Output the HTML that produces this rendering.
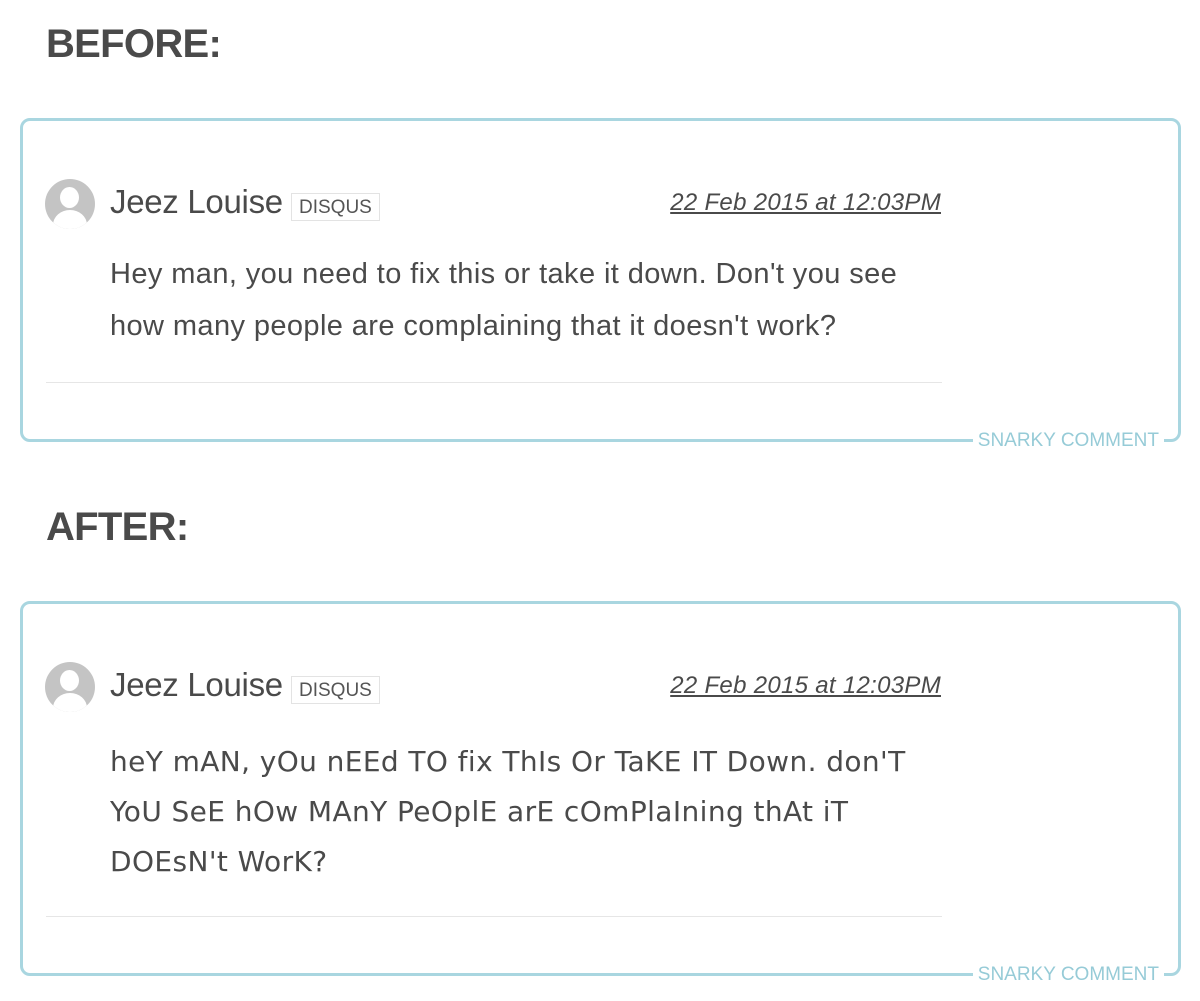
<!DOCTYPE html>
<html><head><style>
body{margin:0;width:1200px;height:1001px;background:#fff;position:relative;font-family:"Liberation Sans",sans-serif;color:#4a4a4a;overflow:hidden}
.h{position:absolute;left:46px;font-weight:bold;font-size:40px;color:#4a4a4a;letter-spacing:-0.7px}
.box{position:absolute;left:20px;width:1161px;border:3px solid #a9d6e0;border-radius:10px;box-sizing:border-box}
.av{position:absolute;left:22px;width:50px;height:50px;border-radius:50%;background:#c4c4c4;overflow:hidden}
.av:before{content:"";position:absolute;left:15px;top:8px;width:19px;height:21px;border-radius:50%;background:#fff}
.av:after{content:"";position:absolute;left:8px;top:31px;width:34px;height:30px;border-radius:50%;background:#fff}
.name{position:absolute;left:87px;font-size:33px;color:#4a4a4a;white-space:nowrap;letter-spacing:-0.3px}
.tag{position:absolute;left:268px;font-size:19px;border:1px solid #e3e3e3;padding:2px 7px;color:#555;height:28px;box-sizing:border-box;line-height:23px}
.date{position:absolute;right:237px;font-size:24px;font-style:italic;text-decoration:underline;color:#4a4a4a;white-space:nowrap;letter-spacing:0.3px}
.txt{position:absolute;left:87px;font-size:29px;line-height:52px;white-space:nowrap;color:#4a4a4a;letter-spacing:0.4px}
.txt2{position:absolute;left:87px;font-size:28px;line-height:50px;white-space:nowrap;color:#4a4a4a;font-family:"DejaVu Sans",sans-serif;letter-spacing:0.4px}
.hr{position:absolute;left:23px;width:896px;height:1px;background:#e6e6e6}
.lab{position:absolute;right:14px;bottom:-12px;background:#fff;padding:0 5px;color:#96cbd7;font-size:19px;line-height:20px}
</style></head><body>
<div class="h" style="top:22px">BEFORE:</div>
<div class="box" style="top:118px;height:324px">
 <div class="av" style="top:58px"></div>
 <div class="name" style="top:62px">Jeez Louise</div>
 <div class="tag" style="top:72px">DISQUS</div>
 <div class="date" style="top:68px">22 Feb 2015 at 12:03PM</div>
 <div class="txt" style="top:127px">Hey man, you need to fix this or take it down. Don't you see<br>how many people are complaining that it doesn't work?</div>
 <div class="hr" style="top:261px"></div>
 <div class="lab">SNARKY COMMENT</div>
</div>
<div class="h" style="top:505px">AFTER:</div>
<div class="box" style="top:601px;height:375px">
 <div class="av" style="top:58px"></div>
 <div class="name" style="top:62px">Jeez Louise</div>
 <div class="tag" style="top:72px">DISQUS</div>
 <div class="date" style="top:68px">22 Feb 2015 at 12:03PM</div>
 <div class="txt2" style="top:133px">heY mAN, yOu nEEd TO fix ThIs Or TaKE IT Down. don'T<br>YoU SeE hOw MAnY PeOplE arE cOmPlaIning thAt iT<br>DOEsN't WorK?</div>
 <div class="hr" style="top:312px"></div>
 <div class="lab">SNARKY COMMENT</div>
</div>
</body></html>
